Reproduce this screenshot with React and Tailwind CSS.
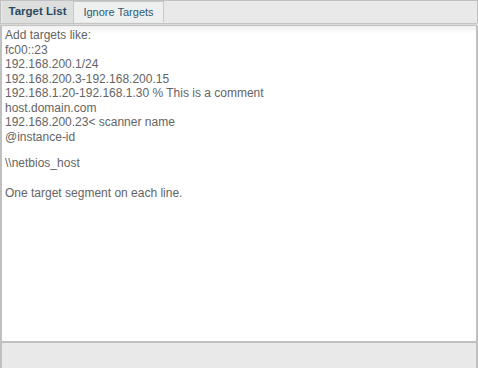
import { useState } from "react";

const placeholderLines = [
  "Add targets like:",
  "fc00::23",
  "192.168.200.1/24",
  "192.168.200.3-192.168.200.15",
  "192.168.1.20-192.168.1.30 % This is a comment",
  "host.domain.com",
  "192.168.200.23< scanner name",
  "@instance-id",
];

export default function App() {
  const [tab, setTab] = useState("targets");

  return (
    <div
      className="w-[478px] h-[368px] flex flex-col bg-[#e8e9e8] border-t border-[#c0c0c0] overflow-hidden"
      style={{ fontFamily: "'Liberation Sans', Arial, sans-serif" }}
    >
      <div className="flex h-[22px] border-l border-r border-[#c0c0c0] pl-px">
        <button
          onClick={() => setTab("targets")}
          className={`w-[72px] h-[22px] text-[11.5px] border-r border-[#c8c8c8] ${
            tab === "targets"
              ? "bg-[#dcdfde] font-bold text-[#2b4a5e]"
              : "bg-[#eef0ef] text-[#2f5a73]"
          }`}
        >
          Target List
        </button>
        <button
          onClick={() => setTab("ignore")}
          className={`w-[90px] h-[21px] text-[11px] border-r border-t border-[#c8c8c8] ${
            tab === "ignore"
              ? "bg-[#dcdfde] font-bold text-[#2b4a5e]"
              : "bg-[#eef0ef] text-[#2f5a73]"
          }`}
        >
          Ignore Targets
        </button>
      </div>
      <div className="h-[3px] bg-[#d8d9d8] border-y border-[#c4c4c4] mr-px" />
      <div className="h-[315px] bg-white border-l-2 border-r-2 border-[#c0c0c0] bg-gradient-to-b from-[#f0f1f0] to-white bg-no-repeat bg-[length:100%_8px] px-[3px] pt-[2px] text-[12px] leading-[14.5px] text-[#646464]">
        {placeholderLines.map((line) => (
          <div key={line}>{line}</div>
        ))}
        <div className="mt-[12px]">\\netbios_host</div>
        <div className="mt-[15px]">One target segment on each line.</div>
      </div>
      <div className="flex-1 border-t-2 border-l-2 border-r-2 border-[#c0c0c0] bg-[#e8e9e8]" />
    </div>
  );
}
